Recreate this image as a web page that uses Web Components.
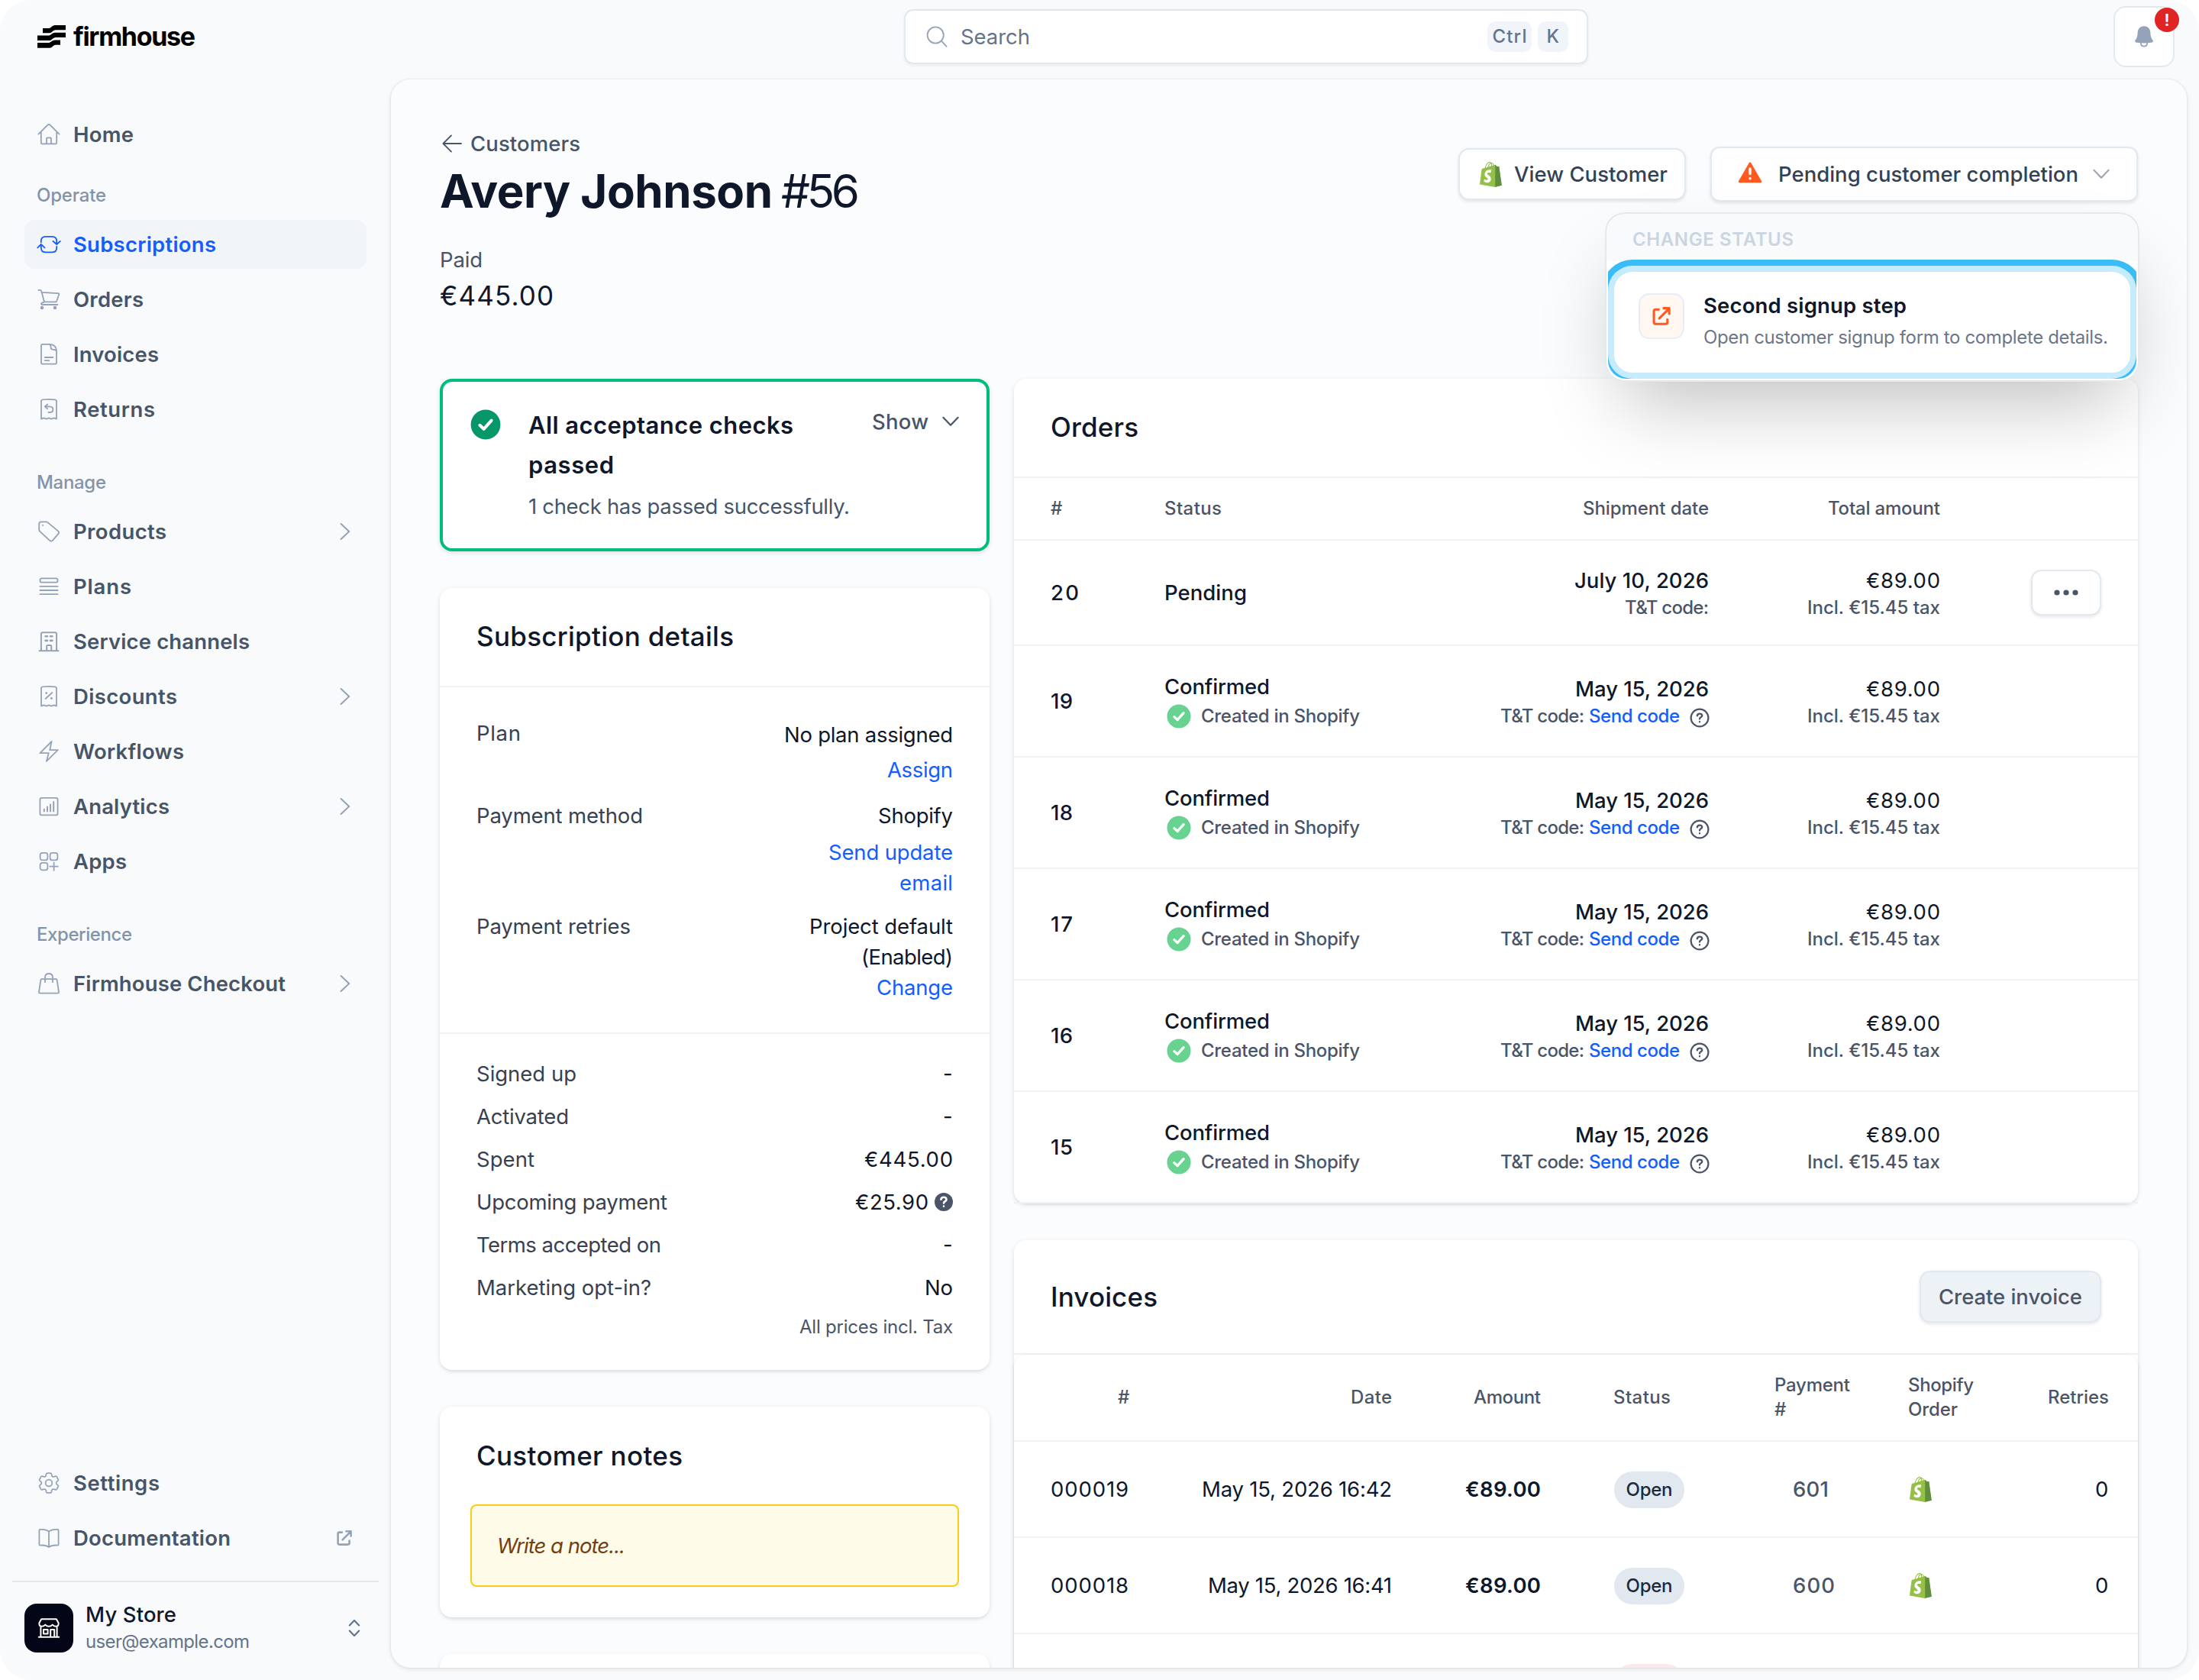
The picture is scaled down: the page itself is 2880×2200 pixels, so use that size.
<!DOCTYPE html>
<html lang="en">
<head>
<meta charset="utf-8">
<title>Firmhouse</title>
<style>
    html { background: #fff; }

    body {
        margin: 0;
        width: 2880px;
        height: 2200px;
        overflow: hidden;
        font-family: Inter, "Liberation Sans", sans-serif;
        font-size: 27.5px;
        line-height: 40px;
        color: #0f172a;
    }
</style>
</head>
<body>
<app-shell>
    <top-bar slot="top"></top-bar>
    <side-bar slot="side"></side-bar>
    <page-header></page-header>
    <div style="display: grid; grid-template-columns: 720px 1472px; column-gap: 32px; align-items: start">
        <div style="display: grid; row-gap: 48px">
            <acceptance-card></acceptance-card>
            <subscription-card></subscription-card>
            <notes-card></notes-card>
            <ui-card style="height: 200px"></ui-card>
        </div>
        <div style="display: grid; row-gap: 48px">
            <orders-card></orders-card>
            <invoices-card></invoices-card>
        </div>
    </div>
</app-shell>

<script>
// Icons {{{1

const COG = 'M9.594 3.94c.09-.542.56-.94 1.11-.94h2.593c.55 0 1.02.398 1.11.94l.213 1.281c.063.374.313.686.645.87.074.04.147.083.22.127.325.196.72.257 1.075.124l1.217-.456a1.125 1.125 0 0 1 1.37.49l1.296 2.247a1.125 1.125 0 0 1-.26 1.431l-1.003.827c-.293.241-.438.613-.43.992a7.723 7.723 0 0 1 0 .255c-.008.378.137.75.43.991l1.004.827c.424.35.534.955.26 1.43l-1.298 2.247a1.125 1.125 0 0 1-1.369.491l-1.217-.456c-.355-.133-.75-.072-1.076.124a6.47 6.47 0 0 1-.22.128c-.331.183-.581.495-.644.869l-.213 1.281c-.09.543-.56.94-1.11.94h-2.594c-.55 0-1.019-.398-1.11-.94l-.213-1.281c-.062-.374-.312-.686-.644-.87a6.52 6.52 0 0 1-.22-.127c-.325-.196-.72-.257-1.076-.124l-1.217.456a1.125 1.125 0 0 1-1.369-.49l-1.297-2.247a1.125 1.125 0 0 1 .26-1.431l1.004-.827c.292-.24.437-.613.43-.991a6.932 6.932 0 0 1 0-.255c.007-.38-.138-.751-.43-.992l-1.004-.827a1.125 1.125 0 0 1-.26-1.43l1.297-2.247a1.125 1.125 0 0 1 1.37-.491l1.216.456c.356.133.751.072 1.076-.124.072-.044.146-.086.22-.128.332-.183.582-.495.644-.869l.214-1.28Z';

const RECEIPT = '<path d="M6 28.6V4.8C6 3.4 10 2.9 16 2.9s10 .5 10 1.9v23.8l-3.2-1.3-3.6 1.3-3.2-1.3-3.2 1.3-3.6-1.3z"/>';

// name: [width, height, svg content]
const ICONS = {
    logo: [37, 30, '<g fill="#000" stroke="none"><path d="M7 4h8c3 0 4-4 8-4h14v6.2H24c-4 0-5 4-8 4H7z"/><path d="M0 13.4h15c3 0 4-3.6 8-3.6h14V16H24c-4 0-5 4-8 4H0z"/><path d="M0 23h15c3 0 4-3.4 8-3.4h7v6.2h-6c-4 0-4 4-8 4H0z"/></g>'],
    home: [32, 32, '<path d="M2.4 15.6 14.2 3.8q1.8-1.5 3.6 0L29.6 15.6M5.8 12.6V27q0 1.3 1.3 1.3h17.8q1.3 0 1.3-1.3V12.6M13 28v-6.4q0-1.2 1.2-1.2h3.6q1.2 0 1.2 1.2V28"/>'],
    sync: [32, 32, '<path d="M5.8 13.6v-2q0-5.8 5.8-5.8h8.8q5.8 0 5.8 5.8v4.2M21.4 11.8l4.8 4.2 4.6-4.2M26.2 19v1.6q0 5.8-5.8 5.8h-8.8q-5.8 0-5.8-5.8v-4.4M1.2 20.4l4.6-4.4 4.8 4.4"/>'],
    cart: [32, 32, '<path d="M2.4 3.8h2.2q1.2 0 1.5 1.2l4 14.4h14.6q1.2 0 1.5-1.2l3.1-8.8q.3-1.1-.9-1.2L7.2 6.8M10.1 19.4l-3.5 1.4q-1.2 1 .2 2.2h20.6"/><circle cx="7" cy="27" r="1.4" fill="currentColor"/><circle cx="24" cy="27" r="1.4" fill="currentColor"/>'],
    file: [32, 32, '<path d="M6 4.2q0-1.3 1.3-1.3H17q9 .6 9 8.4v16q0 1.3-1.3 1.3H7.300q-1.300 0-1.300-1.300zM17 2.900q1.600 1.400 1.600 3.900 0 2.700 2.400 2.800 3.200 0 5 1.900M10.800 20h10.600M10.800 24.200h5.400"/>'],
    returns: [32, 32, RECEIPT + '<path d="M14.200 9.400 10.800 12.400l3.400 3M11 12.400h6.400q4 .2 4 3.800t-4 3.800h-1.800"/>'],
    tag: [32, 32, '<path d="M3.200 6q0-2.700 2.700-2.700h6.300q1.300 0 2.300.8L28 15.400q2 1.800.3 3.700l-7.300 8.500q-1.900 1.900-3.900.2L4.200 15.900q-1-.9-1-2.100z"/><path d="M7.800 7.800h.5"/>'],
    plans: [32, 32, '<rect x="4.500" y="5.300" width="23" height="5.400" rx="2.200"/><path d="M4.400 15.800h23.200M4.400 21h23.200M4.400 26.200h23.200"/>'],
    building: [32, 32, '<path d="M5.900 28V6.200q0-2 2-2h16.200q2 0 2 2V28M3.400 28.300h25.200M13.200 28v-6q0-1 1-1h4q1 0 1 1v6" stroke-width="2"/><path d="M11.600 9.300h2.400M18 9.300h2.400M11.600 14.900h2.400M18 14.900h2.400" stroke-width="2.600"/>'],
    discount: [32, 32, RECEIPT + '<path d="M11.600 19 20.400 11"/><path d="M12.600 11.600h.2M19.300 18.500h.2" stroke-width="2.800"/>'],
    bolt: [32, 32, '<path d="M19.600 3 4.400 18.100h11.400L12.900 28.800 27.800 14.200H17.200z"/>'],
    chart: [32, 32, '<rect x="4.400" y="4.800" width="23.200" height="22.600" rx="2.200"/><path d="M9.800 22.400v-2.600M14 22.400v-5.800M18 22.400v-9M22.200 22.400V10" stroke-width="2"/>'],
    apps: [32, 32, '<rect x="4.600" y="4.800" width="9.800" height="9.600" rx="3"/><rect x="17.600" y="4.800" width="9.800" height="9.600" rx="3"/><rect x="4.600" y="17.800" width="9.800" height="9.600" rx="3"/><path d="M22.600 17.400v10.400M17.200 22.600h10.600"/>'],
    bag: [32, 32, '<path d="M6.600 10.200h18.800q1 0 1.200 1L29 27q.1 1.600-1.300 1.600H4.300Q2.900 28.600 3 27l2.400-15.800q.2-1 1.200-1zM11 14.200V8q0-5 5-5t5 5v6.200"/>'],
    cog: [32, 32, `<g transform="translate(16 16) scale(1.44) translate(-12 -12)" stroke-width="1.200"><path d="${COG}"/><circle cx="12" cy="12" r="3"/></g>`],
    book: [32, 32, '<path d="M16 7.600Q13 4.600 6 4.800H4.600q-1.200 0-1.200 1.200v18.400q0 1.200 1.200 1.200Q12 25 16 28q4-3 11.400-2.400 1.200 0 1.200-1.200V6q0-1.200-1.200-1.200H26q-7-.2-10 2.800zM16 7.600V28"/>'],
    external: [22, 22, '<path d="M8 3.600H4.600q-2 0-2 2v12q0 2 2 2h11q2 0 2-2v-3M8.600 13.400 19.400 2.600M13.400 2.200h6.200v6.200"/>'],
    store: [28, 28, '<path d="M3.400 13v12M24.600 13v12M.8 25.800h26.400M4.200 2.200h19.600l2.800 5q.6 4.600-3.200 4.600-2.600 0-4.700-2.200-2.100 2.200-4.700 2.200t-4.700-2.200Q7.200 11.800 4.600 11.800.8 11.800 1.400 7.200zM7 16h5.600v5.400H7zM16.200 25.600V16h5v9.600"/>'],
    updown: [16, 24, '<path d="M1.800 8.400 8 2l6.200 6.400M1.800 15.600 8 22l6.200-6.400"/>'],
    right: [14, 24, '<path d="M1.600 2 12.200 12 1.600 22"/>'],
    down: [22, 14, '<path d="M1.400 1.800 11 11.800l9.600-10"/>'],
    back: [28, 26, '<path d="M26 13H2.600M13 2.400 2.400 13 13 23.600"/>'],
    search: [28, 28, '<circle cx="12.200" cy="12" r="10.600"/><path d="m20 19.600 6.600 7.200"/>'],
    bell: [26, 30, '<path stroke="none" fill="currentColor" d="M13 1.200a8.300 8.300 0 0 0-8.400 8.300c0 5-1 7.400-3.200 10.300-.8 1.200-.2 2.400 1 2.600 6.500 1.300 14.700 1.300 21.200 0 1.200-.2 1.800-1.400 1-2.600-2.200-2.900-3.200-5.300-3.200-10.300A8.300 8.300 0 0 0 13 1.200z"/><path d="M8.800 23q0 4.600 4.200 4.600t4.200-4.600"/>'],
    check: [40, 40, '<circle cx="20" cy="20" r="19.400" fill="currentColor" stroke="none"/><path stroke="#fff" stroke-width="4" d="m12.400 20.800 5.200 5 10-11.200"/>'],
    helpFill: [24, 24, '<circle cx="12" cy="12" r="12" fill="currentColor" stroke="none"/><path stroke="#fff" stroke-width="2.600" d="M8.400 8.800q.4-3 3.600-3t3.600 2.800q0 1.800-2.200 2.900-1.400.7-1.400 2.100M12 17.600v.2"/>'],
    help: [26, 26, '<circle cx="13" cy="13" r="11.400"/><path stroke-width="2.400" d="M9.800 10.200q.4-2.600 3.200-2.600t3.200 2.400q0 1.600-2 2.500-1.200.6-1.200 1.900M13 18.200v.1"/>'],
    warning: [32, 30, '<path fill="currentColor" stroke="currentColor" stroke-width="3" d="M16 3 29.600 26.800H2.400z"/><path stroke="#fff" stroke-width="3.400" d="M16 10v6.600M16 22.600v.1"/>'],
    dots: [32, 8, '<g fill="currentColor" stroke="none"><circle cx="4" cy="4" r="3.600"/><circle cx="16" cy="4" r="3.600"/><circle cx="28" cy="4" r="3.600"/></g>'],
    shopify: [109.500, 124.500, '<g stroke="none"><path fill="#95bf47" d="M95.900 23.900c-.1-.6-.6-1-1.100-1s-9.300-.2-9.300-.2-7.400-7.200-8.100-7.900c-.7-.7-2.200-.5-2.700-.3 0 0-1.400.4-3.700 1.100-.4-1.300-1-2.800-1.800-4.400-2.600-5-6.500-7.700-11.100-7.700-.3 0-.6 0-1 .1-.1-.2-.3-.3-.4-.5-2-2.200-4.600-3.200-7.700-3.100-6 .2-12 4.500-16.800 12.200-3.400 5.400-6 12.200-6.700 17.500-6.900 2.100-11.700 3.600-11.800 3.700-3.500 1.100-3.600 1.200-4 4.500-.3 2.500-9.500 73.200-9.500 73.200l75.600 13.100 32.800-8.100S96 24.500 95.900 23.900zM67.200 16.800c-1.700.5-3.700 1.100-5.800 1.800 0-3-.4-7.300-1.800-10.900 4.500.9 6.700 6 7.600 9.100zm-10 3.100c-4 1.200-8.400 2.600-12.800 3.900 1.200-4.700 3.600-9.400 6.400-12.500 1.100-1.100 2.600-2.400 4.300-3.200 1.800 3.500 2.200 8.400 2.100 11.800zM49.100 4c1.400 0 2.600.3 3.600.9-1.600.8-3.200 2.100-4.700 3.600-3.800 4.100-6.700 10.500-7.900 16.600-3.600 1.100-7.200 2.200-10.500 3.200C31.700 18.800 39.800 4.300 49.100 4z"/><path fill="#5e8e3e" d="M94.800 22.900c-.5 0-9.300-.2-9.300-.2s-7.400-7.200-8.100-7.900c-.3-.3-.6-.4-1-.5V124l32.800-8.100S95.800 25.200 95.700 24.600c.1-1.300-.4-1.700-.9-1.700z"/><path fill="#fff" d="m58 39.900-3.800 14.400s-4.300-2-9.400-1.600c-7.500.5-7.500 5.200-7.500 6.400.4 6.400 17.300 7.800 18.300 22.900.7 11.900-6.300 20-16.400 20.600-12.200.8-18.900-6.400-18.900-6.400l2.600-11s6.700 5.100 12.100 4.700c3.500-.2 4.800-3.100 4.700-5.100-.5-8.400-14.300-7.900-15.200-21.700-.7-11.600 6.900-23.400 23.700-24.400 6.500-.5 9.800 1.200 9.800 1.200z"/></g>'],
};

// Helpers {{{1

// Defines a custom element whose shadow root is made from a css string and
// a function that returns its markup.
function define(name, css, render) {
    customElements.define(name, class extends HTMLElement {
        connectedCallback() {
            if (this.shadowRoot)
                return;
            this.attachShadow({ mode: 'open' });
            this.shadowRoot.innerHTML = `<style>${css}</style>${render(this)}`;
        }
    });
}

const icon = (name, cls = '') => `<ui-icon name="${name}" class="${cls}"></ui-icon>`;
const t = (text, width, cls = '') => `<fit-text width="${width}" class="${cls}">${text}</fit-text>`;

// Small parts {{{1

define('ui-icon', `
    :host { display: block; flex: none; }
    svg { display: block; width: 100%; height: auto; overflow: visible; }
`, el => {
    const [w, h, body] = ICONS[el.getAttribute('name')];
    if (!el.style.width && w < 100)
        el.style.width = w + 'px';
    return `<svg viewBox="0 0 ${w} ${h}" fill="none" stroke="currentColor" stroke-width="var(--stroke, 1.8)" stroke-linecap="round" stroke-linejoin="round">${body}</svg>`;
});

// One line of text, tracked so that it takes exactly the given width. The
// space after the last letter doesn't count.
customElements.define('fit-text', class extends HTMLElement {
    connectedCallback() {
        if (this.shadowRoot)
            return;
        this.attachShadow({ mode: 'open' });
        this.shadowRoot.innerHTML = `
            <style>
            :host { display: block; white-space: nowrap; flex: none; }
            span { display: inline-block; }
            </style>
            <span><slot></slot></span>`;
        const width = Number(this.getAttribute('width'));
        const gaps = this.textContent.length - 1;
        const span = this.shadowRoot.querySelector('span');
        const natural = span.getBoundingClientRect().width;
        if (gaps > 0)
            span.style.letterSpacing = (width - natural) / gaps + 'px';
        this.style.width = width + 'px';
    }
});

define('ui-card', `
    :host {
        display: block;
        background: #fff;
        border-radius: 16px;
        box-shadow: 0 2px 6px rgba(0, 0, 0, .1), 0 2px 4px -2px rgba(0, 0, 0, .1);
    }
`, () => '<slot></slot>');

define('ui-button', `
    :host {
        box-sizing: border-box;
        display: flex;
        align-items: center;
        background: #fff;
        border: 2px solid #e2e8f0;
        border-radius: 14px;
        font-weight: 500;
        color: #334155;
        box-shadow: 0 2px 4px rgba(0, 0, 0, .1);
    }
`, () => '<slot></slot>');

// Shell {{{1

define('app-shell', `
    :host {
        display: grid;
        grid-template: 104px 2080px / 512px 2352px;
        width: 2880px;
        height: 2200px;
        background: #f8fafc;
        border-radius: 40px;
        overflow: hidden;
    }
    ::slotted([slot=top]) { grid-column: 1 / 3; }
    main {
        box-sizing: border-box;
        padding: 64px 64px 0;
        overflow: hidden;
        background: #fbfcfe;
        border-radius: 26px;
        box-shadow: 0 2px 6px rgba(0, 0, 0, .1), 0 0 3px rgba(0, 0, 0, .08);
    }
`, () => `
    <slot name="top"></slot>
    <slot name="side"></slot>
    <main><slot></slot></main>
`);

define('top-bar', `
    :host {
        display: grid;
        grid-template-columns: 1184px 896px 1fr;
        align-items: center;
        height: 96px;
    }
    .brand {
        display: flex;
        align-items: center;
        gap: 10px;
        padding-left: 49px;
        font-size: 34px;
        font-weight: 750;
        color: #000;
    }
    .search {
        box-sizing: border-box;
        display: flex;
        align-items: center;
        height: 72px;
        padding: 0 24px 0 27px;
        background: #fff;
        border: 2px solid #e2e8f0;
        border-radius: 12px;
        box-shadow: 0 2px 4px rgba(0, 0, 0, .06);
        color: #64748b;
    }
    .search ui-icon { margin-right: 17px; color: #94a3b8; }
    kbd {
        display: grid;
        place-content: center;
        height: 40px;
        background: #f1f5f9;
        border-radius: 10px;
        font: 500 24px/40px Inter, sans-serif;
    }
    .bell {
        position: relative;
        box-sizing: border-box;
        display: grid;
        place-content: center;
        justify-self: end;
        width: 80px;
        height: 80px;
        margin-right: 16px;
        background: #fff;
        border: 2px solid #e2e8f0;
        border-radius: 16px;
        color: #94a3b8;
    }
    .badge {
        position: absolute;
        right: -8px;
        top: 0;
        width: 32px;
        height: 32px;
        border-radius: 50%;
        background: #e02424;
        color: #fff;
        font-size: 22px;
        font-weight: 600;
        line-height: 32px;
        text-align: center;
    }
`, () => `
    <div class="brand">${icon('logo')}${t('firmhouse', 160)}</div>
    <div class="search">
        ${icon('search')}${t('Search', 91)}
        <kbd style="width: 58px; margin-left: auto">${t('Ctrl', 45)}</kbd>
        <kbd style="width: 40px; margin-left: 8px">${t('K', 17)}</kbd>
    </div>
    <div class="bell">${icon('bell')}<span class="badge">!</span></div>
`);

// Sidebar {{{1

define('nav-item', `
    :host {
        box-sizing: border-box;
        display: flex;
        align-items: center;
        height: 64px;
        margin-bottom: 8px;
        padding: 0 21px 0 16px;
        border-radius: 14px;
        font-weight: 600;
        color: #475569;
    }
    :host([active]) { background: #f1f5f9; color: #155dfc; }
    :host([active]) .icon { color: inherit; }
    .icon { margin-right: 16px; color: #94a3b8; }
    .end { margin-left: auto; color: #94a3b8; --stroke: 2; }
    .end[name=external] { margin-right: -3px; --stroke: 2.6; }
`, el => {
    const end = el.getAttribute('end');
    return icon(el.getAttribute('icon'), 'icon')
        + t(el.getAttribute('label'), el.getAttribute('width'))
        + (end ? icon(end, 'end') : '');
});

const navItem = ([label, width, name, attrs = '']) =>
    `<nav-item label="${label}" width="${width}" icon="${name}" ${attrs}></nav-item>`;

define('side-bar', `
    :host {
        box-sizing: border-box;
        display: flex;
        flex-flow: column nowrap;
        height: 2096px;
        padding: 40px 16px 0;
    }
    nav { padding: 0 16px; }
    h2 {
        margin: 48px 16px 16px;
        font-size: 24px;
        font-weight: 500;
        line-height: 32px;
        color: #8394aa;
    }
    h2.first { margin-top: 32px; }
    .bottom { margin-top: auto; }
    .account {
        display: flex;
        align-items: center;
        height: 64px;
        margin-top: 16px;
        padding: 28px 24px 36px 16px;
        border-top: 2px solid #e2e8f0;
    }
    .avatar {
        display: grid;
        place-content: center;
        width: 64px;
        height: 64px;
        margin-right: 16px;
        background: #020617;
        border-radius: 16px;
        color: #fff;
        --stroke: 2;
    }
    .who { line-height: 36px; }
    .name { font-weight: 500; color: #0f172a; }
    .mail { font-size: 24px; color: #64748b; }
    .updown { margin-left: auto; color: #64748b; --stroke: 2.2; }
`, () => `
    <nav>
        ${navItem(['Home', 79, 'home'])}
        <h2 class="first">${t('Operate', 91)}</h2>
        ${[
            ['Subscriptions', 187, 'sync', 'active'],
            ['Orders', 92, 'cart'],
            ['Invoices', 112, 'file'],
            ['Returns', 107, 'returns'],
        ].map(navItem).join('')}
        <h2>${t('Manage', 91)}</h2>
        ${[
            ['Products', 122, 'tag', 'end="right"'],
            ['Plans', 76, 'plans'],
            ['Service channels', 231, 'building'],
            ['Discounts', 136, 'discount', 'end="right"'],
            ['Workflows', 145, 'bolt'],
            ['Analytics', 126, 'chart', 'end="right"'],
            ['Apps', 70, 'apps'],
        ].map(navItem).join('')}
        <h2>${t('Experience', 125)}</h2>
        ${navItem(['Firmhouse Checkout', 278, 'bag', 'end="right"'])}
    </nav>
    <nav class="bottom">
        ${navItem(['Settings', 113, 'cog'])}
        ${navItem(['Documentation', 206, 'book', 'end="external"'])}
    </nav>
    <div class="account">
        <div class="avatar">${icon('store')}</div>
        <div class="who">
            ${t('My Store', 119, 'name')}
            ${t('user@example.com', 215, 'mail')}
        </div>
        ${icon('updown', 'updown')}
    </div>
`);

// Page header {{{1

define('page-header', `
    :host {
        position: relative;
        z-index: 1;
        display: flex;
        justify-content: space-between;
        height: 328px;
    }
    .back {
        display: flex;
        align-items: center;
        gap: 10px;
        padding-left: 2px;
        font-weight: 500;
        color: #475569;
    }
    h1 {
        display: flex;
        gap: 11px;
        margin: 2px 0 30px;
        font-size: 60px;
        font-weight: 700;
        line-height: 80px;
    }
    h1 .number { font-weight: 400; }
    .label { color: #475569; }
    .paid { margin-top: 3px; font-size: 35px; line-height: 48px; }
    .actions {
        display: flex;
        gap: 32px;
        align-items: flex-start;
        margin-top: 24px;
    }
    .view { height: 68px; margin-top: 2px; padding: 0 22px 0 26px; }
    .view ui-icon { margin-right: 16px; }
    .status { height: 72px; width: 560px; padding: 0 0 0 34px; border-radius: 12px; }
    .warn { margin-right: 21px; margin-top: -4px; color: #ff5a1f; }
    .down { margin-left: 19px; color: #9ca3af; --stroke: 2; }
    status-menu { position: absolute; right: -2px; top: 110px; }
`, () => `
    <div>
        <div class="back">${icon('back')}${t('Customers', 144)}</div>
        <h1>${t('Avery Johnson', 436)}${t('#56', 103, 'number')}</h1>
        ${t('Paid', 56, 'label')}
        ${t('€445.00', 149, 'paid')}
    </div>
    <div class="actions">
        <ui-button class="view"><ui-icon name="shopify" style="width: 29px"></ui-icon>${t('View Customer', 201)}</ui-button>
        <ui-button class="status">
            ${icon('warning', 'warn')}${t('Pending customer completion', 393)}${icon('down', 'down')}
        </ui-button>
    </div>
    <status-menu></status-menu>
`);

define('status-menu', `
    :host {
        box-sizing: border-box;
        display: block;
        width: 700px;
        height: 222px;
        padding: 0 2px 2px;
        border: 2px solid #e6e9ec;
        border-radius: 26px;
        background: linear-gradient(#f8fafc 60px, #fff 62px);
        box-shadow: 0 50px 100px -24px rgba(0, 0, 0, .25);
    }
    .clip {
        display: flex;
        flex-flow: column nowrap;
        height: 216px;
        overflow: hidden;
        border-radius: 24px;
    }
    .title {
        padding: 18px 32px 0;
        height: 58px;
        font-size: 24px;
        font-weight: 600;
        line-height: 32px;
        color: #cbd5e1;
    }
    .item {
        display: flex;
        height: 132px;
        margin: 0 8px;
        background: #fff;
        border-radius: 24px;
        box-shadow: 0 0 0 8px #c6ebfc, 0 0 0 16px #38bdf8;
    }
    .icon {
        box-sizing: border-box;
        display: grid;
        place-content: center;
        width: 60px;
        height: 60px;
        margin: 28px 25px 0 32px;
        background: #fff7f0;
        border: 2px solid #e8eef8;
        border-radius: 14px;
        color: #ff5a1f;
        --stroke: 2.6;
    }
    .name { margin-top: 24px; font-weight: 600; }
    .hint { margin-top: 2px; font-size: 24px; color: #6b7788; }
`, () => `
    <div class="clip">
        <div class="title">${t('CHANGE STATUS', 211)}</div>
        <div class="item">
            <div class="icon"><ui-icon name="external" style="width: 26px"></ui-icon></div>
            <div>
                ${t('Second signup step', 266, 'name')}
                ${t('Open customer signup form to complete details.', 530, 'hint')}
            </div>
        </div>
    </div>
`);

// Left column {{{1

define('acceptance-card', `
    :host {
        box-sizing: border-box;
        display: flex;
        align-items: flex-start;
        height: 226px;
        padding: 0 36px;
        background: #fff;
        border: 4px solid #00bc7d;
        border-radius: 16px;
        box-shadow: 0 2px 6px rgba(0, 0, 0, .12);
    }
    .check { margin: 36px 36px 0 0; color: #059669; }
    .title { font-size: 31px; font-weight: 600; line-height: 52px; }
    .title:first-child { margin-top: 31px; }
    .sub { margin-top: 8px; color: #475569; }
    .show {
        display: flex;
        align-items: center;
        gap: 18px;
        margin: 32px 0 0 auto;
        font-weight: 500;
        color: #475569;
    }
    .text { width: 350px; }
    .show ui-icon { --stroke: 2.2; }
`, () => `
    ${icon('check', 'check')}
    <div class="text">
        ${t('All acceptance checks', 347, 'title')}
        ${t('passed', 112, 'title')}
        ${t('1 check has passed successfully.', 421, 'sub')}
    </div>
    <div class="show">${t('Show', 74)}${icon('down')}</div>
`);

define('detail-row', `
    :host {
        display: flex;
        justify-content: space-between;
        color: #374151;
    }
    .value { color: #0f172a; }
`, () => '<slot name="label"></slot><div class="value"><slot></slot></div>');

const detail = (label, width, values, style = '') => `
    <detail-row style="${style}">
        <div slot="label">${t(label, width)}</div>
        <div class="values">${values}</div>
    </detail-row>`;

define('subscription-card', `
    :host { display: block; }
    h2 {
        margin: 0;
        padding: 31px 48px 33px;
        font-size: 35px;
        font-weight: 500;
        line-height: 64px;
        border-bottom: 2px solid #edf2f7;
    }
    section { padding: 40px 48px 39px; }
    section + section { padding: 24px 48px 32px; border-top: 2px solid #edf2f7; }
    .values { color: #0f172a; }
    .values fit-text, .total { margin-left: auto; }
    .link { color: #155dfc; }
    .with-icon { display: flex; align-items: center; gap: 8px; }
    .with-icon ui-icon { color: #4a5568; }
    .total { font-size: 24px; line-height: 48px; color: #4a5568; }
`, () => `
    <ui-card>
        <h2>${t('Subscription details', 337)}</h2>
        <section>
            ${detail('Plan', 58, `<div style="padding-top: 2px">${t('No plan assigned', 221)}</div>
                <div style="padding-top: 6px">${t('Assign', 86, 'link')}</div>`)}
            ${detail('Payment method', 218, `${t('Shopify', 98)}
                <div style="padding-top: 8px">${t('Send update', 163, 'link')}${t('email', 70, 'link')}</div>`, 'margin-top: 20px')}
            ${detail('Payment retries', 202, t('Project default', 188) + t('(Enabled)', 120) + t('Change', 100, 'link'), 'margin-top: 17px')}
        </section>
        <section>
            ${[
                ['Signed up', 131, t('-', 13)],
                ['Activated', 121, t('-', 13)],
                ['Spent', 76, t('€445.00', 116)],
                ['Upcoming payment', 250, `<div class="with-icon">${t('€25.90', 96)}${icon('helpFill')}</div>`],
                ['Terms accepted on', 242, t('-', 13)],
                ['Marketing opt-in?', 229, t('No', 37)],
            ].map(row => detail(...row, 'line-height: 56px')).join('')}
            ${t('All prices incl. Tax', 201, 'total')}
        </section>
    </ui-card>
`);

define('notes-card', `
    :host { display: block; }
    ui-card { box-sizing: border-box; height: 276px; padding: 32px 40px 0; }
    h2 { margin: 0 8px 32px; font-size: 35px; font-weight: 500; line-height: 64px; }
    .note {
        box-sizing: border-box;
        height: 108px;
        padding: 32px 33px;
        background: #fefce8;
        border: 2px solid #facc15;
        border-radius: 8px;
        font-style: italic;
        color: #713f12;
    }
`, () => `
    <ui-card>
        <h2>${t('Customer notes', 270)}</h2>
        <div class="note">${t('Write a note...', 168)}</div>
    </ui-card>
`);

// Orders {{{1

define('orders-card', `
    :host { display: block; }
    h2 { margin: 0; padding: 31px 48px 33px; font-size: 35px; font-weight: 500; line-height: 64px; }
    .row {
        box-sizing: border-box;
        display: grid;
        grid-template-columns: 149px 413px 300px 303px 211px;
        align-items: center;
        height: 146px;
        padding: 0 48px;
        border-top: 2px solid #edf2f7;
        font-weight: 500;
    }
    .row:last-child { height: 148px; border-bottom: 2px solid #edf2f7; }
    .head { height: 82px; font-size: 24px; color: #4a5568; }
    .r { display: grid; justify-items: end; padding-top: 4px; line-height: 36px; }
    .head .r { padding-top: 0; }
    .regular { font-weight: 400; }
    .small { display: flex; align-items: center; font-size: 24px; color: #4a5568; }
    .link { color: #155dfc; }
    .check { color: #68d391; margin-right: 13px; }
    .status .small { padding-left: 3px; line-height: 38px; }
    ui-button { width: 92px; height: 60px; justify-content: center; justify-self: end; color: #4a5568; }
`, () => {
    const order = (number, first) => `
        <div class="row" style="${first ? 'height: 138px' : ''}">
            ${t(number, first ? 37 : 29)}
            <div class="status">
                ${first ? t('Pending', 108) : t('Confirmed', 138)}
                ${first ? '' : `<div class="small">
                    <ui-icon name="check" class="check" style="width: 32px"></ui-icon>${t('Created in Shopify', 208)}
                </div>`}
            </div>
            <div class="r">
                ${first ? t('July 10, 2026', 176) : t('May 15, 2026', 175)}
                <div class="small">
                    ${t('T&amp;T code:', 110)}
                    ${first ? '' : `<span style="width: 6px"></span>${t('Send code', 119, 'link')}
                        <ui-icon name="help" style="margin: 4px -1px 0 13px; --stroke: 2.2"></ui-icon>`}
                </div>
            </div>
            <div class="r">
                ${t('€89.00', 97, 'regular')}
                <div class="small">${t('Incl. €15.45 tax', 174)}</div>
            </div>
            ${first ? `<ui-button>${icon('dots')}</ui-button>` : ''}
        </div>`;
    return `
        <ui-card>
            <h2>${t('Orders', 115)}</h2>
            <div class="row head">
                ${t('#', 14)}${t('Status', 75)}
                <div class="r">${t('Shipment date', 165)}</div>
                <div class="r">${t('Total amount', 147)}</div>
            </div>
            ${order('20', true)}
            ${['19', '18', '17', '16', '15'].map(n => order(n, false)).join('')}
        </ui-card>`;
});

// Invoices {{{1

define('invoices-card', `
    :host { display: block; }
    header {
        box-sizing: border-box;
        display: flex;
        justify-content: space-between;
        align-items: center;
        height: 150px;
        padding: 0 48px;
        border-bottom: 2px solid #edf2f7;
    }
    h2 { margin: 0; font-size: 35px; font-weight: 500; }
    ui-button { height: 68px; padding: 0 23px; background: #edf2f7; color: #4a5568; }
    .row {
        box-sizing: border-box;
        display: grid;
        grid-template-columns: 102px 345px 195px 306px 175px 130px 133px;
        align-items: center;
        height: 126px;
        padding: 0 38px 0 48px;
        border-bottom: 2px solid #edf2f7;
    }
    .head { height: 114px; font-size: 24px; font-weight: 500; line-height: 32px; color: #4a5568; }
    .r { justify-self: end; }
    .status { padding-left: 95px; }
    .strong { font-weight: 600; }
    .pill {
        display: grid;
        place-content: center;
        width: 92px;
        height: 48px;
        margin: 2px 0 0 1px;
        border-radius: 24px;
        background: #e2e8f0;
        color: #1e293b;
        font-size: 24px;
        font-weight: 500;
    }
    .failed { background: #fde8ea; }
    .payment { padding-left: 24px; font-weight: 500; color: #4a5568; }
`, () => {
    const invoice = (number, date, dateWidth, payment, paymentWidth) => `
        <div class="row">
            ${t(number, 102)}
            ${t(date, dateWidth, 'r')}
            ${t('€89.00', 99, 'r strong')}
            <div class="status"><div class="pill">${t('Open', 61)}</div></div>
            <div class="payment">${t(payment, paymentWidth)}</div>
            <ui-icon name="shopify" style="width: 29px; margin-left: 2px"></ui-icon>
            ${t('0', 18, 'r')}
        </div>`;
    return `
        <ui-card>
            <header>
                <h2>${t('Invoices', 140)}</h2>
                <ui-button>${t('Create invoice', 188)}</ui-button>
            </header>
            <ui-card>
                <div class="row head">
                    ${t('#', 14, 'r')}${t('Date', 54, 'r')}${t('Amount', 88, 'r')}
                    <div class="status">${t('Status', 75)}</div>
                    <div>${t('Payment', 99)}${t('#', 14)}</div>
                    <div>${t('Shopify', 86)}${t('Order', 65)}</div>
                    ${t('Retries', 80, 'r')}
                </div>
                ${invoice('000019', 'May 15, 2026 16:42', 249, '601', 47)}
                ${invoice('000018', 'May 15, 2026 16:41', 241, '600', 55)}
                <div class="row">
                    <span></span><span></span><span></span>
                    <div class="status"><div class="pill failed"></div></div>
                </div>
            </ui-card>
        </ui-card>`;
});

// }}}
</script>
</body>
</html>
